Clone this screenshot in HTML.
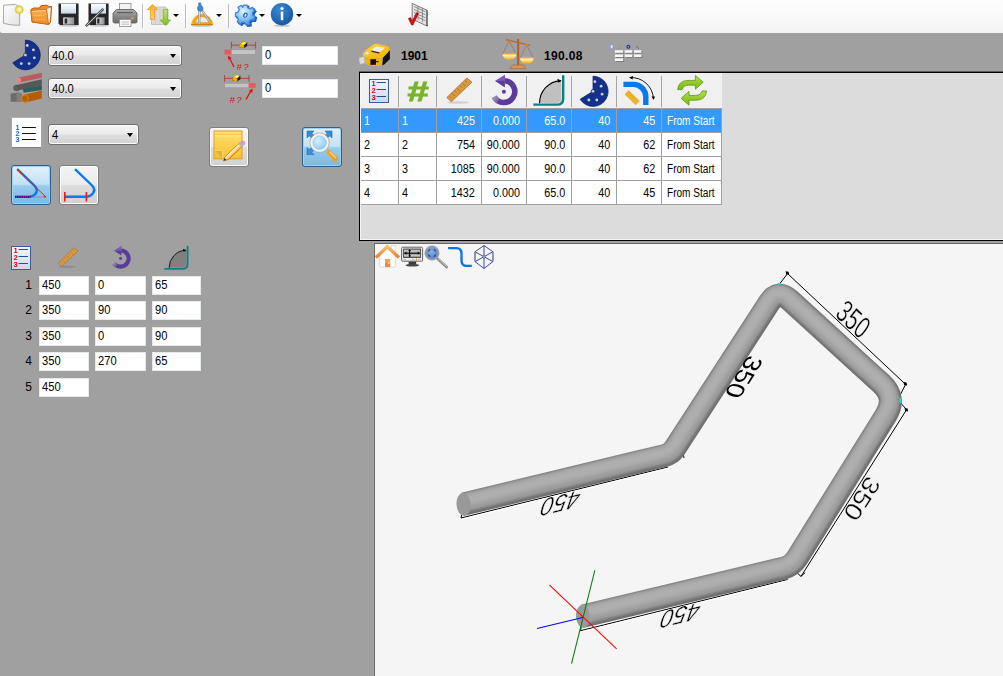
<!DOCTYPE html>
<html>
<head>
<meta charset="utf-8">
<title>Tube Bending</title>
<style>
html,body{margin:0;padding:0;}
body{width:1003px;height:676px;overflow:hidden;background:#a0a0a0;position:relative;
 font-family:"Liberation Sans",sans-serif;font-size:12px;color:#000;}
.abs{position:absolute;}
#toolbar{position:absolute;left:0;top:0;width:1003px;height:33px;
 background:linear-gradient(#fdfdfd 0%,#fafafa 45%,#f3f3f3 100%);border-bottom-left-radius:2px;}
.tsep{position:absolute;top:4px;width:1px;height:24px;background:#bdbdbd;box-shadow:1px 0 0 #fff;}
.dd{position:absolute;top:14px;width:0;height:0;border-left:3px solid transparent;border-right:3px solid transparent;border-top:3px solid #000;}
.combo{position:absolute;height:19px;border:1px solid #707070;border-radius:3px;
 background:linear-gradient(#f4f4f4 0%,#ebebeb 48%,#dedede 52%,#d2d2d2 100%);box-shadow:inset 0 0 0 1px #fbfbfb;}
.combo span{position:absolute;left:3px;top:3px;font-size:12px;line-height:15px;transform-origin:0 50%;transform:scaleX(.93);}
.combo i{position:absolute;right:5px;top:8px;width:0;height:0;border-left:3.5px solid transparent;border-right:3.5px solid transparent;border-top:4px solid #000;}
.inp{position:absolute;background:#fff;border:1px solid #e3e9ef;box-sizing:border-box;}
.inp span{position:absolute;left:2px;top:1px;font-size:12px;line-height:15px;transform-origin:0 50%;transform:scaleX(.93);}
.lbl{position:absolute;font-size:12px;line-height:15px;width:10px;text-align:right;}
.bold{position:absolute;font-weight:bold;font-size:12px;line-height:15px;}
#grid{position:absolute;left:359px;top:71px;width:644px;height:170px;background:#dcdcdc;
 border-left:1px solid #000;border-top:2px solid #000;border-top-color:#000;border-bottom:1px solid #000;box-sizing:border-box;}
#grid:before{content:'';position:absolute;left:-1px;right:0;top:-2px;height:1px;background:#5c5c5c;}
#grid .hl{position:absolute;left:0;top:0;bottom:0;width:1px;background:#f4f4f4;}
#grid .hb{position:absolute;left:0;right:0;bottom:0;height:1px;background:#f4f4f4;}
#ghead{position:absolute;left:1px;top:0;width:361px;height:35px;background:#f0f0f0;border-bottom:1px solid #a0a0a0;}
.hs{position:absolute;top:3px;width:1px;height:31px;background:#a5a5a5;}
.row{position:absolute;left:1px;width:361px;height:23px;background:#fff;border-bottom:1px solid #a0a0a0;}
.row.sel{background:#3399ff;color:#fff;}
.cell{position:absolute;top:0;height:23px;border-right:1px solid #a0a0a0;box-sizing:border-box;font-size:12px;line-height:25px;white-space:nowrap;overflow:hidden;}
.cell span{display:inline-block;transform:scaleX(.9);}
.cell.l{text-align:left;padding-left:3px;}
.cell.l span{transform-origin:0 50%;}
.cell.fs{padding-left:5px;}
.cell.fs span{transform:scaleX(.84);}
.cell.r{text-align:right;padding-right:6px;}
.cell.r span{transform-origin:100% 50%;}
#view{position:absolute;left:374px;top:243px;width:629px;height:433px;background:#f5f5f5;
 border-left:1px solid #696969;border-top:1px solid #696969;box-sizing:border-box;overflow:hidden;}
.btn{position:absolute;width:38px;height:38px;border:1px solid #7e7e7e;border-radius:3px;
 background:linear-gradient(#f4f4f4 0%,#ececec 48%,#dcdcdc 52%,#d2d2d2 100%);box-shadow:inset 0 0 0 1px #fafafa;}
.btn.on{border-color:#2c628b;background:linear-gradient(#dff0fb 0%,#c4e2f6 48%,#98ccee 52%,#7ab9e4 100%);box-shadow:inset 0 0 0 1px #9fd0ee;}
svg{position:absolute;overflow:visible;}
</style>
</head>
<body>
<div id="toolbar">
<div class="tsep" style="left:142px"></div>
<div class="tsep" style="left:185px"></div>
<div class="tsep" style="left:228px"></div>
<div class="dd" style="left:173px"></div>
<div class="dd" style="left:216px"></div>
<div class="dd" style="left:259px"></div>
<div class="dd" style="left:296px"></div>
</div>
<div id="left">
<div class="combo" style="left:48px;top:45px;width:132px"><span>40.0</span><i></i></div>
<div class="combo" style="left:48px;top:78px;width:132px"><span>40.0</span><i></i></div>
<div class="combo" style="left:48px;top:124px;width:89px"><span>4</span><i></i></div>
<div class="inp" style="left:262px;top:46px;width:76px;height:19px"><span style="top:1px">0</span></div>
<div class="inp" style="left:262px;top:79px;width:76px;height:19px"><span style="top:1px">0</span></div>
<div class="bold" style="left:401px;top:49px">1901</div>
<div class="bold" style="left:544px;top:49px;letter-spacing:.35px">190.08</div>
<div class="btn on" style="left:11px;top:165px"></div>
<div class="btn" style="left:59px;top:165px"></div>
<div class="btn" style="left:209px;top:127px"></div>
<div class="btn on" style="left:302px;top:127px"></div>
<div class="abs" style="left:12px;top:118px;width:29px;height:29px;background:#fdfdfd;box-shadow:0 1px 1px rgba(0,0,0,.25), 0 0 0 1px rgba(255,255,255,.15)"></div>
<div class="lbl" style="left:22px;top:278px">1</div>
<div class="inp" style="left:39px;top:276px;width:50px;height:19px"><span>450</span></div>
<div class="inp" style="left:95px;top:276px;width:51px;height:19px"><span>0</span></div>
<div class="inp" style="left:152px;top:276px;width:49px;height:19px"><span>65</span></div>
<div class="lbl" style="left:22px;top:303px">2</div>
<div class="inp" style="left:39px;top:301px;width:50px;height:19px"><span>350</span></div>
<div class="inp" style="left:95px;top:301px;width:51px;height:19px"><span>90</span></div>
<div class="inp" style="left:152px;top:301px;width:49px;height:19px"><span>90</span></div>
<div class="lbl" style="left:22px;top:329px">3</div>
<div class="inp" style="left:39px;top:327px;width:50px;height:19px"><span>350</span></div>
<div class="inp" style="left:95px;top:327px;width:51px;height:19px"><span>0</span></div>
<div class="inp" style="left:152px;top:327px;width:49px;height:19px"><span>90</span></div>
<div class="lbl" style="left:22px;top:354px">4</div>
<div class="inp" style="left:39px;top:352px;width:50px;height:19px"><span>350</span></div>
<div class="inp" style="left:95px;top:352px;width:51px;height:19px"><span>270</span></div>
<div class="inp" style="left:152px;top:352px;width:49px;height:19px"><span>65</span></div>
<div class="lbl" style="left:22px;top:380px">5</div>
<div class="inp" style="left:39px;top:378px;width:50px;height:19px"><span>450</span></div>
</div>
<div id="grid"><div class="hl"></div><div class="hb"></div>
<div id="ghead">
<div class="hs" style="left:37px"></div>
<div class="hs" style="left:75px"></div>
<div class="hs" style="left:120px"></div>
<div class="hs" style="left:165px"></div>
<div class="hs" style="left:210px"></div>
<div class="hs" style="left:255px"></div>
<div class="hs" style="left:300px"></div>
</div>
<div class="row sel" style="top:36px">
<div class="cell l" style="left:0px;width:38px"><span>1</span></div>
<div class="cell l" style="left:38px;width:38px"><span>1</span></div>
<div class="cell r" style="left:76px;width:45px"><span>425</span></div>
<div class="cell r" style="left:121px;width:45px"><span>0.000</span></div>
<div class="cell r" style="left:166px;width:45px"><span>65.0</span></div>
<div class="cell r" style="left:211px;width:45px"><span>40</span></div>
<div class="cell r" style="left:256px;width:45px"><span>45</span></div>
<div class="cell l fs" style="left:301px;width:60px"><span>From Start</span></div>
</div>
<div class="row" style="top:60px">
<div class="cell l" style="left:0px;width:38px"><span>2</span></div>
<div class="cell l" style="left:38px;width:38px"><span>2</span></div>
<div class="cell r" style="left:76px;width:45px"><span>754</span></div>
<div class="cell r" style="left:121px;width:45px"><span>90.000</span></div>
<div class="cell r" style="left:166px;width:45px"><span>90.0</span></div>
<div class="cell r" style="left:211px;width:45px"><span>40</span></div>
<div class="cell r" style="left:256px;width:45px"><span>62</span></div>
<div class="cell l fs" style="left:301px;width:60px"><span>From Start</span></div>
</div>
<div class="row" style="top:84px">
<div class="cell l" style="left:0px;width:38px"><span>3</span></div>
<div class="cell l" style="left:38px;width:38px"><span>3</span></div>
<div class="cell r" style="left:76px;width:45px"><span>1085</span></div>
<div class="cell r" style="left:121px;width:45px"><span>90.000</span></div>
<div class="cell r" style="left:166px;width:45px"><span>90.0</span></div>
<div class="cell r" style="left:211px;width:45px"><span>40</span></div>
<div class="cell r" style="left:256px;width:45px"><span>62</span></div>
<div class="cell l fs" style="left:301px;width:60px"><span>From Start</span></div>
</div>
<div class="row" style="top:108px">
<div class="cell l" style="left:0px;width:38px"><span>4</span></div>
<div class="cell l" style="left:38px;width:38px"><span>4</span></div>
<div class="cell r" style="left:76px;width:45px"><span>1432</span></div>
<div class="cell r" style="left:121px;width:45px"><span>0.000</span></div>
<div class="cell r" style="left:166px;width:45px"><span>65.0</span></div>
<div class="cell r" style="left:211px;width:45px"><span>40</span></div>
<div class="cell r" style="left:256px;width:45px"><span>45</span></div>
<div class="cell l fs" style="left:301px;width:60px"><span>From Start</span></div>
</div>
</div>
<div id="view">
<svg width="628" height="432" viewBox="375 244 628 432" style="left:0;top:0;will-change:transform" font-family="'Liberation Sans',sans-serif">
<defs><path id="tube" d="M464.0 504.0 L664.4 455.6 Q671.2 454.0 675.0 448.1 L769.3 302.6 Q778.0 289.2 789.8 300.0 L881.3 383.6 Q896.8 397.8 885.7 415.6 L797.3 557.7 Q792.0 566.2 782.3 568.5 L583.5 616.0" fill="none" stroke-linejoin="round"/>
<mask id="tm" maskUnits="userSpaceOnUse" x="375" y="244" width="628" height="432"><use href="#tube" stroke="#fff" stroke-width="23"/></mask>
<filter id="bl1" x="-10%" y="-10%" width="120%" height="120%"><feGaussianBlur stdDeviation="1"/></filter>
<filter id="bl2" x="-10%" y="-10%" width="120%" height="120%"><feGaussianBlur stdDeviation="2"/></filter></defs>
<g stroke="#000" stroke-width="1" fill="none">
<path d="M779.7 283.8 L787.6 273.6 L905.6 384.4 L899.8 395.6"/>
<path d="M899.8 402 L906.6 409.7 L801 576.4 M797 572.8 L801 576.4 L805.2 572.6"/>
<path d="M463.5 505 L461 518 L668 467"/>
<path d="M583 618 L580.5 630.7 L787.7 579.5"/>
<path d="M683 452.5 L684 458"/>
</g>
<g stroke="#fff" stroke-width="1" fill="none"><path d="M461.5 519.2 L668.5 468.2"/><path d="M581 631.9 L788 580.7"/></g>
<path d="M785.6 271.3 l3 0.5 l0.5 3 l-3 -0.5z M903.6 382 l3 0.5 l0.5 3 l-3 -0.5z M904.6 408 l3 0.5 l0.5 3 l-3 -0.5z" fill="#000"/>
<g mask="url(#tm)">
<use href="#tube" stroke="#707070" stroke-width="27"/>
<use href="#tube" stroke="#9a9a9a" stroke-width="18.6" transform="translate(-0.5,-1.2)" filter="url(#bl1)"/>
<use href="#tube" stroke="#afafaf" stroke-width="11" transform="translate(-1.2,-3)" filter="url(#bl2)"/>
</g>
<ellipse cx="463.5" cy="504.5" rx="7" ry="11.5" transform="rotate(-4 463.5 504.5)" fill="#999"/>
<ellipse cx="583" cy="616.5" rx="7" ry="11.5" transform="rotate(-4 583 616.5)" fill="#999"/>
<g stroke-width="1.05" fill="none"><path d="M549.3 584.8 L616.6 648.9" stroke="#ff0000"/><path d="M594.8 570.3 L571.5 663.6" stroke="#008000"/><path d="M537 628.6 L582.8 617.4" stroke="#0000ff"/></g>
<rect x="778" y="283" width="3" height="1.5" fill="#20d8e8"/><rect x="899.5" y="398" width="1.5" height="5" fill="#20d8e8"/>
<g fill="#000">
<text transform="matrix(0.653 0.619 -0.733 1.038 834.3 315.4)" font-size="24" stroke="#f5f5f5" stroke-width=".35">350</text>
<text transform="matrix(-0.624 1.001 -0.950 -0.300 748.5 354.5)" font-size="24">350</text>
<text transform="matrix(-0.638 0.982 -0.839 -0.545 867.7 474.6)" font-size="24" stroke="#f5f5f5" stroke-width=".35">350</text>
<text transform="matrix(-0.972 0.233 0.365 -1.080 582.6 489.6)" font-size="24" stroke="#f5f5f5" stroke-width=".35">450</text>
<text transform="matrix(-0.972 0.233 0.365 -1.080 702.5 601.7)" font-size="24" stroke="#f5f5f5" stroke-width=".35">450</text>
</g>
</svg>
</div>
<svg id="icons" width="1003" height="676" viewBox="0 0 1003 676" style="left:0;top:0" font-family="'Liberation Sans',sans-serif">
<defs>
<linearGradient id="gPaper" x1="0" y1="0" x2="1" y2="1"><stop offset="0" stop-color="#ffffff"/><stop offset="1" stop-color="#e2e2e2"/></linearGradient>
<radialGradient id="gGlow"><stop offset="0" stop-color="#ffffff"/><stop offset=".35" stop-color="#fff3a0"/><stop offset=".7" stop-color="#f8d040"/><stop offset="1" stop-color="#a8d850"/></radialGradient>
<linearGradient id="gFold" x1="0" y1="0" x2="0" y2="1"><stop offset="0" stop-color="#f8b050"/><stop offset="1" stop-color="#ee8c20"/></linearGradient>
<linearGradient id="gLabel" x1="0" y1="0" x2="0" y2="1"><stop offset="0" stop-color="#ffffff"/><stop offset="1" stop-color="#c8d8e8"/></linearGradient>
<linearGradient id="gShut" x1="0" y1="0" x2="1" y2="0"><stop offset="0" stop-color="#e8e8e8"/><stop offset="1" stop-color="#8c8c8c"/></linearGradient>
<linearGradient id="gPrn" x1="0" y1="0" x2="0" y2="1"><stop offset="0" stop-color="#a8a8a8"/><stop offset=".5" stop-color="#8a8a8a"/><stop offset="1" stop-color="#6a6a6a"/></linearGradient>
<linearGradient id="gUp" x1="0" y1="0" x2="0" y2="1"><stop offset="0" stop-color="#f8b020"/><stop offset="1" stop-color="#f0d080"/></linearGradient>
<linearGradient id="gDn" x1="0" y1="0" x2="0" y2="1"><stop offset="0" stop-color="#c8e070"/><stop offset="1" stop-color="#78c020"/></linearGradient>
<radialGradient id="gInfo" cx=".4" cy=".3" r=".8"><stop offset="0" stop-color="#3a8ad8"/><stop offset="1" stop-color="#12509c"/></radialGradient>
<radialGradient id="gGear" cx=".4" cy=".3" r=".75"><stop offset="0" stop-color="#e4f4ff"/><stop offset=".55" stop-color="#88c4f4"/><stop offset="1" stop-color="#3c8ce0"/></radialGradient>
</defs>
<!-- new doc -->
<g>
<path d="M3.6 5.2 L15.5 4.4 L19.6 7 L19.7 25.3 L12 25 L3.6 23.4Z" fill="url(#gPaper)" stroke="#a8a8a8" stroke-width="1"/>
<circle cx="19.2" cy="9.6" r="4.4" fill="url(#gGlow)"/>
</g>
<!-- folder -->
<g>
<path d="M31 9.5 L33.5 8 L39.5 8 L41 5.6 L47.5 5.2 L48.5 6.8 L51.6 6.4 L50.5 22 L49 24.4 L32 22Z" fill="#e89030" stroke="#b85c10" stroke-width="1"/>
<path d="M47 9 L50.8 7.4 L49.4 23 L47.4 23Z" fill="#f4f4f8"/>
<path d="M30.8 10.5 L46.6 9.4 L48.6 24.4 L32.2 21.8Z" fill="url(#gFold)" stroke="#c46a14" stroke-width=".8"/>
<path d="M32 11.4 L45.8 10.4" stroke="#fbd9a0" stroke-width=".8" fill="none"/>
<path d="M34 15.8 L44.4 15.4 M34.6 19.6 L45 19.4" stroke="#fbd9a0" stroke-width=".7" stroke-dasharray="1.2 1" fill="none"/>
</g>
<!-- save -->
<g>
<path d="M58.5 3.4 H78.6 V25 H60 L58.5 23.5Z" fill="#26262a"/>
<rect x="61" y="3.8" width="15" height="9.8" fill="url(#gLabel)"/>
<rect x="63.2" y="17.4" width="11" height="7.2" fill="url(#gShut)"/>
<rect x="64.6" y="18.6" width="2.6" height="5" fill="#2a2a2e"/>
<ellipse cx="69" cy="25.8" rx="10" ry="1" fill="#000" opacity=".18"/>
</g>
<!-- save as -->
<g>
<path d="M88.5 3.4 H108.6 V25 H90 L88.5 23.5Z" fill="#26262a"/>
<rect x="91" y="3.8" width="15" height="9.8" fill="url(#gLabel)"/>
<rect x="96.2" y="17.4" width="8.4" height="7.2" fill="url(#gShut)"/>
<rect x="97.2" y="18.6" width="2.2" height="5" fill="#2a2a2e"/>
<path d="M86.6 25.4 L102.6 9.6" stroke="#4a4a4a" stroke-width="2.6" stroke-linecap="round"/>
<path d="M86.8 25.2 L102.4 9.8" stroke="#c8c8c8" stroke-width="1" stroke-linecap="round"/>
<ellipse cx="99" cy="25.8" rx="10" ry="1" fill="#000" opacity=".18"/>
</g>
<!-- printer -->
<g>
<rect x="119.4" y="3.4" width="11.6" height="7" fill="#f4f4f4" stroke="#8c8c8c" stroke-width=".8"/>
<path d="M116.5 9.5 H133.5 L137 13 V21.5 Q137 23 135.5 23 H114.5 Q113 23 113 21.5 V13Z" fill="url(#gPrn)" stroke="#5c5c5c" stroke-width=".8"/>
<path d="M117 12.6 H133" stroke="#5a5a5a" stroke-width="1.2"/>
<rect x="131" y="17.6" width="2.6" height="1.6" fill="#f0a030"/>
<rect x="119.4" y="19.4" width="11.6" height="7.2" fill="#fafafa" stroke="#8c8c8c" stroke-width=".8"/>
<path d="M121.5 22 H129 M121.5 24.2 H129" stroke="#b4b4b4" stroke-width=".9"/>
</g>
<!-- import/export -->
<g>
<path d="M151.5 7 H165.5 L168 9.5 V24.5 H151.5Z" fill="#dcdcdc" stroke="#b8b8b8" stroke-width=".8"/>
<path d="M156 8 V24 M160 8 V24 M164 9 V24" stroke="#c8c8c8" stroke-width=".8"/>
<path d="M152.5 4.4 L157.6 9.6 H154.6 V19.4 H150.4 V9.6 H147.4Z" fill="url(#gUp)" stroke="#e89010" stroke-width=".7"/>
<path d="M165.4 25.4 L160.2 20 H163.2 V9.4 H167.6 V20 H170.6Z" fill="url(#gDn)" stroke="#70b020" stroke-width=".7"/>
</g>
<!-- compass/protractor -->
<g>
<ellipse cx="202" cy="25.6" rx="11" ry="1.1" fill="#000" opacity=".22"/>
<path d="M191.2 24.8 A11 11.8 0 0 1 213.1 24.8Z" fill="#f0a414"/>
<path d="M192 24 A10.2 11 0 0 1 197 15.4" fill="none" stroke="#f8c050" stroke-width="1"/>
<path d="M196.2 22.3 A6 5.4 0 0 1 208.2 22.3Z" fill="#ececec"/>
<path d="M191.2 24.6 H213.1" stroke="#c07c0c" stroke-width="1"/>
<path d="M199.6 9 L199.2 24" stroke="#8c8c90" stroke-width="2.2"/>
<path d="M199.6 9 L199.2 24" stroke="#dcdce0" stroke-width="1"/>
<path d="M201.2 9 L209.4 21.4" stroke="#8c8c90" stroke-width="2.2"/>
<path d="M201.2 9 L209.4 21.4" stroke="#dcdce0" stroke-width="1"/>
<path d="M198.4 3 L200.6 2.8 L201 5 L203 7.6 Q203.4 11.2 200.4 11.2 Q197.2 11.2 197.4 7.8 L198.8 5Z" fill="#3c88d4" stroke="#2468b0" stroke-width=".5"/>
</g>
<!-- gear -->
<g transform="translate(245.2 14.6) scale(.9)">
<path d="M-2 -10.6 H2 L2.8 -7.6 L5.2 -6.4 L8 -8 L10.4 -4.6 L8.2 -2.2 L8.4 0.6 L11 2 L9.8 6 L6.6 5.8 L4.6 7.8 L5 11 L1 11.6 L-0.4 8.8 L-3.2 8.4 L-5.4 10.6 L-8.8 8.2 L-7.6 5.2 L-8.8 2.8 L-11 2 L-10.6 -2 L-7.8 -2.8 L-6.6 -5.4 L-8 -8.2 L-4.6 -10.2 L-2.6 -8Z" transform="translate(1.6 1.3)" fill="#1c5cb4" stroke="#1c5cb4" stroke-width="1.6" stroke-linejoin="round"/>
<path d="M-2 -10.6 H2 L2.8 -7.6 L5.2 -6.4 L8 -8 L10.4 -4.6 L8.2 -2.2 L8.4 0.6 L11 2 L9.8 6 L6.6 5.8 L4.6 7.8 L5 11 L1 11.6 L-0.4 8.8 L-3.2 8.4 L-5.4 10.6 L-8.8 8.2 L-7.6 5.2 L-8.8 2.8 L-11 2 L-10.6 -2 L-7.8 -2.8 L-6.6 -5.4 L-8 -8.2 L-4.6 -10.2 L-2.6 -8Z" fill="url(#gGear)" stroke="#3c84d4" stroke-width="1.4" stroke-linejoin="round"/>
<ellipse cx="0.4" cy="0.4" rx="2.3" ry="3" transform="rotate(25)" fill="#1c58a8"/>
<ellipse cx="0.6" cy="0.6" rx="1.1" ry="1.8" transform="rotate(25)" fill="#d8ecfc"/>
</g>
<!-- info -->
<g>
<ellipse cx="282" cy="25.8" rx="8" ry="1" fill="#000" opacity=".2"/>
<circle cx="282" cy="14.2" r="11.2" fill="url(#gInfo)"/>
<rect x="280.8" y="11.6" width="2.4" height="8.6" rx=".6" fill="#fff"/>
<circle cx="282" cy="8.6" r="1.5" fill="#fff"/>
</g>
<!-- checklist -->
<g>
<path d="M412.2 3.4 L427 10.2 L427 26 L412.2 19.2Z" fill="#e4e4e4" stroke="#6e6e6e" stroke-width=".9"/>
<path d="M414 6.5 L425.5 11.8 M414 9.5 L425.5 14.8 M414 12.5 L425.5 17.8 M414 15.5 L425.5 20.8 M418 6 V20 M422.4 8 V22.4" stroke="#7c7c7c" stroke-width=".8" fill="none"/>
<path d="M427 10.2 L427 26 L428 25.4" stroke="#444" stroke-width="1" fill="none"/>
<path d="M408.4 18.6 L410.6 17.6 L412.4 21 L416.6 12.6 L418.4 13.4 L413 25 L411.6 25Z" fill="#e01010" stroke="#900000" stroke-width=".6"/>
</g>
<defs>
<linearGradient id="gPan" x1="0" y1="0" x2="0" y2="1"><stop offset="0" stop-color="#ff9a00"/><stop offset=".35" stop-color="#fff0c0"/><stop offset="1" stop-color="#ffa408"/></linearGradient>
<linearGradient id="gTapeTop" x1="0" y1="0" x2="1" y2="1"><stop offset="0" stop-color="#ffd640"/><stop offset="1" stop-color="#f0b000"/></linearGradient>
<linearGradient id="gRuler" x1="0" y1="0" x2="1" y2="1"><stop offset="0" stop-color="#e8b060"/><stop offset="1" stop-color="#c88428"/></linearGradient>
<linearGradient id="gPurp" x1="0" y1="0" x2="0" y2="1"><stop offset="0" stop-color="#7048a8"/><stop offset="1" stop-color="#5a3c98"/></linearGradient>
<linearGradient id="gListBg" x1="0" y1="0" x2="0" y2="1"><stop offset="0" stop-color="#f4f8fc"/><stop offset="1" stop-color="#c8d8ea"/></linearGradient>
<linearGradient id="gNote" x1="0" y1="0" x2="0" y2="1"><stop offset="0" stop-color="#ffe070"/><stop offset="1" stop-color="#f8c030"/></linearGradient>
<radialGradient id="gLens" cx=".4" cy=".35" r=".7"><stop offset="0" stop-color="#d4f0ff"/><stop offset="1" stop-color="#80c8f4"/></radialGradient>
<g id="die">
<path d="M0 0 L0 -16 A16 16 0 1 1 -13.6 8.4Z" fill="#12308c" stroke="#0c2470" stroke-width=".8"/>
<circle cx="0" cy="0" r="2" fill="#c8c8d0" stroke="#0c2470" stroke-width=".8"/>
<circle cx="2" cy="-10.2" r="1.5" fill="#d0d0d0"/><circle cx="8.6" cy="-5.4" r="1.5" fill="#d0d0d0"/>
<circle cx="9.6" cy="3" r="1.5" fill="#d0d0d0"/><circle cx="4" cy="9.2" r="1.5" fill="#d0d0d0"/>
<circle cx="-4.4" cy="9.2" r="1.5" fill="#d0d0d0"/>
</g>
<g id="tape">
<path d="M20.4 14.8 L27 7.6 L27.2 16.4 L21.4 22 L19.4 23Z" fill="#141414"/>
<path d="M0.2 11 L3.2 7.4 L10.6 2 Q12.6 1 14.4 1.2 L24.2 3.4 Q27.4 4.6 26.4 7.4 L25.2 9.6 L20.2 14.6 Q19 16 17 15.8 L2.2 15 Q0 14.4 0.2 11Z" fill="url(#gTapeTop)"/>
<path d="M1.6 14.6 L18.8 15.8 L19.4 23 L9.4 23.6 L2.4 21.2Z" fill="#f0b208"/>
<path d="M8.2 7.4 L13.2 3.6 L22.2 5.2 L17.2 9.6Z" fill="#ececec"/>
<path d="M8.2 7.8 L17.2 10 L16.2 11 L9.2 9.4Z" fill="#282828"/>
<ellipse cx="4.4" cy="10.6" rx="1.6" ry="1.3" fill="#f4f4f4"/>
<rect x="7.6" y="16.6" width="5.6" height="5.6" fill="#101010"/><rect x="13.2" y="18.6" width="2.6" height="1" fill="#101010"/>
<path d="M-3.6 15 L1.6 13.8 L2 20.6 L-2.6 21.6 Q-4.4 18.4 -3.6 15Z" fill="#dcdcdc" stroke="#a8a8a8" stroke-width=".5"/>
</g>
<g id="mtape">
<path d="M0 3 L3.6 0.4 L8 1 L8 4.6 L5 6.6 L0 5.8Z" fill="#181818"/>
<path d="M0 3 L3.6 0.4 L8 1 L4.8 3.8Z" fill="#ffd030"/>
<path d="M0 3 L4.8 3.8 L5 6.6 L0 5.8Z" fill="#f0b000"/>
<path d="M2.8 2.2 L4.4 1 L6.4 1.4 L5 2.6Z" fill="#fff"/>
</g>
</defs>
<!-- die -->
<use href="#die" transform="translate(25.4 55) scale(.93)"/>
<!-- tubes -->
<g>
<path d="M18.8 77.6 L41.8 72.8 V77.8 L19 82.6Z" fill="#be5a5a"/>
<ellipse cx="19" cy="80.2" rx="2.2" ry="2.5" fill="#ff7e80"/>
<path d="M15.8 85.2 L41.8 79.2 V85.4 L16.6 90.8Z" fill="#585858"/>
<ellipse cx="16.2" cy="88" rx="2.6" ry="2.8" fill="#606060" stroke="#484848" stroke-width=".6"/>
<path d="M23 88.8 L41.8 85.4 V90 L23.6 92.8Z" fill="#2a5e5e"/>
<path d="M10.6 93.6 L19 92.4 L21.4 93.2 V101.8 H10.6Z" fill="#6c6c6c"/>
<path d="M16.6 92.8 L19 92.4 L21.4 93.2 V101.8 H16.8Z" fill="#7e7e7e"/>
<path d="M24 94.8 L41.8 90.4 V98.6 L25.4 102.4Z" fill="#b85c00"/>
<ellipse cx="24.8" cy="98.6" rx="3.5" ry="3.8" fill="#b86000" stroke="#e08a08" stroke-width=".9"/>
</g>
<!-- measure icons -->
<g>
<rect x="224.5" y="49.8" width="31" height="4.6" fill="#c4c4c4" stroke="#8c8c8c" stroke-width=".5"/>
<rect x="224.5" y="49.8" width="7" height="4.6" fill="#e85858"/>
<path d="M231.4 41.8 V48.6 M255.6 41.8 V48.6 M231.4 45.2 H255.6" stroke="#b03030" stroke-width=".8" fill="none"/>
<use href="#mtape" transform="translate(239.2 41.4)"/>
<path d="M234 67 L229.4 58" stroke="#e01010" stroke-width="1.3" fill="none"/>
<path d="M227.8 55.6 L231.8 58 L228.2 59.8Z" fill="#e01010"/>
<text x="236.6" y="69.8" font-size="9.4" font-style="italic" fill="#b82828" letter-spacing="1.5">#?</text>
</g>
<g>
<rect x="224.5" y="83.2" width="31" height="4.6" fill="#c4c4c4" stroke="#8c8c8c" stroke-width=".5"/>
<rect x="248.6" y="83.2" width="7" height="4.6" fill="#e85858"/>
<path d="M224.6 75 V81.8 M249 75 V81.8 M224.6 78.4 H249" stroke="#b03030" stroke-width=".8" fill="none"/>
<use href="#mtape" transform="translate(232.4 74.6)"/>
<path d="M246 99.4 L251 90.8" stroke="#e01010" stroke-width="1.3" fill="none"/>
<path d="M252.6 88.4 L252.4 93 L248.8 90.8Z" fill="#e01010"/>
<text x="229.6" y="103" font-size="9.4" font-style="italic" fill="#b82828" letter-spacing="1.5">#?</text>
</g>
<!-- tape measure -->
<use href="#tape" transform="translate(362.8 42.6)"/>
<!-- scales -->
<g>
<path d="M510.2 68.6 L512.6 65 H523.4 L525.8 68.6Z" fill="#d89858" stroke="#a85c28" stroke-width=".6"/>
<rect x="517.1" y="38.8" width="2.1" height="26.4" fill="#b0622c"/>
<path d="M506 39.6 L529.8 45.4" stroke="#b4662c" stroke-width="1.3"/>
<path d="M509 41 L503.2 53 M509 41 L515.8 53 M526.6 45.2 L520.6 57 M526.6 45.2 L533 57" stroke="#a85c30" stroke-width=".8" stroke-dasharray="1.6 .8" fill="none"/>
<rect x="508" y="39.6" width="2.2" height="2.4" fill="#c87830"/><rect x="525.4" y="43.8" width="2.2" height="2.4" fill="#d88830"/>
<path d="M502.8 53.2 H516.2 V55.4 Q514.6 59.8 509.5 59.8 Q504.4 59.8 502.8 55.4Z" fill="url(#gPan)"/>
<path d="M520.2 57 H533.4 V59.2 Q531.8 63.8 526.8 63.8 Q521.8 63.8 520.2 59.2Z" fill="url(#gPan)"/>
</g>
<!-- mini tree icon -->
<g>
<g fill="#7e7e7e"><rect x="616" y="51.2" width="8.2" height="2.6"/><rect x="625.8" y="51.2" width="7.6" height="2.6"/><rect x="635" y="51.2" width="7.4" height="2.6"/>
<rect x="616" y="55.4" width="8.2" height="2.6"/><rect x="625.8" y="55.4" width="7.6" height="2.6"/><rect x="635" y="55.4" width="7.4" height="2.6"/><rect x="616" y="59.4" width="8.2" height="2.6"/></g>
<g fill="#f6f6f6"><rect x="614.9" y="50.2" width="8.2" height="2.6"/><rect x="624.7" y="50.2" width="7.6" height="2.6"/><rect x="634" y="50.2" width="7.4" height="2.6"/>
<rect x="614.9" y="54.4" width="8.2" height="2.6"/><rect x="624.7" y="54.4" width="7.6" height="2.6"/><rect x="634" y="54.4" width="7.4" height="2.6"/><rect x="614.9" y="58.4" width="8.2" height="2.6"/></g>
<rect x="610.2" y="44.8" width="2.8" height="4" fill="#dce8f8" stroke="#7088c8" stroke-width=".5"/>
<rect x="619" y="45.2" width="1.2" height="3.6" fill="#c88848"/>
<circle cx="628.4" cy="46.8" r="2" fill="#2838a0"/><circle cx="628.4" cy="46.8" r=".8" fill="#a8b0d8"/>
<path d="M636 46 L639 48.6" stroke="#707070" stroke-width="1"/>
</g>
<defs>
<g id="rlist">
<rect x=".5" y=".5" width="19" height="23" fill="url(#gListBg)" stroke="#3c5c9c" stroke-width="1"/>
<g font-size="7.6" font-weight="bold" fill="#e00010"><text x="2.4" y="6.8">1</text><text x="2.4" y="13.8">2</text><text x="2.4" y="20.8">3</text></g>
<path d="M7.6 3.5 H17 M7.6 10.5 H17 M7.6 17.5 H17" stroke="#2c4c8c" stroke-width="1"/>
</g>
<g id="ruler">
<ellipse cx="-1" cy="12.2" rx="11" ry="1.4" fill="#000" opacity=".12"/>
<path d="M-12.4 7.4 L7.6 -12.2 L12.6 -8 L-7.8 11.6Z" fill="url(#gRuler)" stroke="#a87018" stroke-width=".8"/>
<path d="M-9.6 6 l1.6 1.6 M-7 3.4 l2.4 2.4 M-4.4 0.8 l1.6 1.6 M-1.8 -1.8 l2.4 2.4 M0.8 -4.4 l1.6 1.6 M3.4 -7 l2.4 2.4 M6 -9.6 l1.6 1.6" stroke="#8c5a10" stroke-width=".7"/>
</g>
<linearGradient id="gTail" gradientUnits="userSpaceOnUse" x1="-12" y1="6" x2="-4" y2="12"><stop offset="0" stop-color="#c0c0c0" stop-opacity=".7"/><stop offset="1" stop-color="#5a3d9a"/></linearGradient>
<g id="rot">
<path d="M0.8 -10.9 A10.9 10.9 0 1 1 -9.6 5.2" fill="none" stroke="#5a3d9a" stroke-width="5.6"/>
<path d="M-5.6 9.4 A10.9 10.9 0 0 1 -9.9 4.6" fill="none" stroke="url(#gTail)" stroke-width="5.6"/>
<path d="M1 -16.6 L1 -4.2 L-8.8 -10.6Z" fill="#5a3d9a"/>
<path d="M1 -16.6 L1 -11 L-8.8 -10.6Z" fill="#7a5cb8"/>
<circle cx="0" cy="0" r="2" fill="#5a3d9a"/>
</g>
<g id="bend">
<path d="M6.6 27.6 A22.4 22.4 0 0 1 28.4 5.6 L28.4 23.4 Q28.4 28 23.6 28Z" fill="#000" fill-opacity=".2"/>
<path d="M6.6 28 A22.4 22.4 0 0 1 27.6 5.4" fill="none" stroke="#000" stroke-width="1.1"/>
<path d="M28.6 5.6 L24.4 3.6 L25.2 7.6Z" fill="#000"/>
<path d="M30.2 0 V23.2 Q30.2 29.4 24 29.4 H0.4" fill="none" stroke="#0f7f7f" stroke-width="2.4"/>
</g>
<g id="brad">
<path d="M0.4 9.4 H10.4 A12.4 12.4 0 0 1 22.8 21.8 V30" fill="none" stroke="#0a78e8" stroke-width="5.4"/>
<path d="M7.2 2.6 A22 22 0 0 1 30.4 23.6" fill="none" stroke="#000" stroke-width=".9"/>
<path d="M6 2.4 L10 1 L9.6 4.6Z M30.6 25 L28.6 21.6 L32 21.4Z" fill="#000"/>
<path d="M5.6 15.6 L16.4 26 L12.6 29.8 L2 19.4Z" fill="#f0b428" stroke="#d89810" stroke-width=".5"/><path d="M6 18.6 l1.4 -1.4 M8 20.6 l1.4 -1.4 M10 22.6 l1.4 -1.4 M12 24.6 l1.4 -1.4" stroke="#c88808" stroke-width=".5"/>
</g>
<linearGradient id="gGreen" x1="0" y1="0" x2="0" y2="1"><stop offset="0" stop-color="#b4dc40"/><stop offset="1" stop-color="#78b818"/></linearGradient>
<g id="refresh">
<path d="M0.6 14.6 Q1.6 5.6 11 5.4 H18.4 V0.4 L26.2 7.2 L18.4 14.2 V10.2 H11.6 Q6.4 10.2 5.2 14.6Z" fill="url(#gGreen)" stroke="#5a9810" stroke-width=".8" stroke-linejoin="round"/>
<path d="M29.6 16 Q28.6 25 19.2 25.2 H12 V30.2 L4.2 23.4 L12 16.4 V20.4 H18.6 Q23.8 20.4 25 16Z" fill="url(#gGreen)" stroke="#5a9810" stroke-width=".8" stroke-linejoin="round"/>
</g>
</defs>
<!-- table header icons -->
<use href="#rlist" transform="translate(369 79)"/>
<text transform="translate(407.4 101.4) scale(1.36 1)" font-size="28" font-weight="bold" fill="#78b428" stroke="#78b428" stroke-width=".9">#</text>
<use href="#ruler" transform="translate(459.2 90.2)"/>
<use href="#rot" transform="translate(503.9 91.7)"/>
<use href="#bend" transform="translate(533 75.2)"/>
<use href="#die" transform="translate(593 91.3) scale(.945)"/>
<use href="#brad" transform="translate(623 75)"/>
<use href="#refresh" transform="translate(677 75)"/>
<!-- left list header icons -->
<use href="#rlist" transform="translate(11 246)"/>
<use href="#ruler" transform="translate(68 257.2) scale(.78)"/>
<use href="#rot" transform="translate(120.6 258.6) scale(.74)"/>
<use href="#bend" transform="translate(164 246) scale(.78)"/>
<defs>
<linearGradient id="gPencil" x1="0" y1="0" x2="1" y2="1"><stop offset="0" stop-color="#f8b030"/><stop offset=".45" stop-color="#fff4d0"/><stop offset=".6" stop-color="#f8a820"/><stop offset="1" stop-color="#e88c10"/></linearGradient>
<g id="carrow"><path d="M0 0 H7 L4.8 2.2 L7.6 5 L5 7.6 L2.2 4.8 L0 7Z" fill="#3c8cd8" stroke="#2468b0" stroke-width=".6"/></g>
</defs>
<!-- list icon (blue digits) -->
<g>
<g font-size="7.4" font-weight="bold" fill="#1c6cd0"><text x="15.6" y="129.8">1</text><text x="15.6" y="135.8">2</text><text x="15.6" y="141.8">3</text></g>
<path d="M22 127.5 H35.8 M22 133.5 H35.8 M22 139.5 H35.8" stroke="#101010" stroke-width="1"/>
</g>
<!-- button 1 icon -->
<g fill="none">
<path d="M15 197 H45" stroke="#8c8c98" stroke-width="1"/>
<path d="M17.2 169.2 L34.2 185.4 Q39 190.2 35 194.4 Q32.6 196.8 29 196.8 L15 196.8" stroke="#0a78f0" stroke-width="2.4"/>
<path d="M15 197 H31" stroke="#600078" stroke-width="1.8" stroke-dasharray="1.4 .8"/>
<path d="M17 168.8 L45.4 196.6" stroke="#e02020" stroke-width="1"/>
<circle cx="45" cy="196.8" r="1" fill="#e02020"/>
</g>
<!-- button 2 icon -->
<g fill="none">
<path d="M75 169.2 L91.6 185 Q96.4 189.8 92.4 194 Q89.8 196.8 86 196.8 L65 196.8" stroke="#0a78f0" stroke-width="2.4"/>
<path d="M64.8 192 V201.4 M86.4 192 V201.4" stroke="#f01818" stroke-width="1.6"/>
</g>
<!-- note icon -->
<g>
<rect x="214" y="131" width="28" height="27.8" fill="url(#gNote)" stroke="#e09a20" stroke-width="1"/>
<path d="M214.6 135.8 H241.4" stroke="#ffeeb0" stroke-width="1"/>
<path d="M214.6 134.6 H241.4" stroke="#f0b838" stroke-width=".8"/>
<path d="M214.5 150.4 H222.6 V158.4 L214.5 150.4Z" fill="#e8b030"/>
<path d="M214.5 150.4 H222.6 V158.4" fill="none" stroke="#fbe08a" stroke-width=".8"/>
<path d="M225.2 156.6 L240.4 142.2 L243.4 145.2 L228.2 159.6 L223.6 160.8Z" fill="url(#gPencil)" stroke="#a86808" stroke-width=".7"/>
<path d="M239.6 143 L241.6 141 Q243.2 139.8 244.6 141.2 Q246 142.6 244.8 144.2 L242.8 146Z" fill="#d898dc"/>
<path d="M238.6 144 L240 142.6 L243.2 145.8 L241.8 147.2Z" fill="#b0b4bc"/>
<path d="M223.6 160.8 L224.4 158 L226.4 160Z" fill="#303040"/>
</g>
<!-- zoom fit icon -->
<g>
<use href="#carrow" transform="translate(307 131)"/>
<use href="#carrow" transform="translate(332 131) scale(-1 1)"/>
<use href="#carrow" transform="translate(307 154.6) scale(1 -1)"/>
<path d="M325.6 149 L329.4 152.8" stroke="#b8b8b8" stroke-width="4"/>
<path d="M329 152.4 L335.6 159" stroke="#f8a010" stroke-width="4.6" stroke-linecap="round"/>
<path d="M329.6 151.6 L336 158" stroke="#ffd890" stroke-width="1.2"/>
<circle cx="319.6" cy="142.7" r="8.2" fill="url(#gLens)" stroke="#f2f2f2" stroke-width="2.8"/>
<circle cx="319.6" cy="142.7" r="9.7" fill="none" stroke="#a0a0a0" stroke-width=".7"/>
<circle cx="319.6" cy="142.7" r="6.7" fill="none" stroke="#90b8d8" stroke-width=".6"/>
</g>
<defs>
<linearGradient id="gRoof" x1="0" y1="0" x2="0" y2="1"><stop offset="0" stop-color="#f8c060"/><stop offset="1" stop-color="#e88438"/></linearGradient>
<radialGradient id="gLens2" cx=".45" cy=".4" r=".7"><stop offset="0" stop-color="#88b0e0"/><stop offset="1" stop-color="#4878b8"/></radialGradient>
</defs>
<!-- home -->
<g>
<rect x="391.6" y="245.6" width="3.6" height="7" fill="#fdfdfd" stroke="#d0d0d0" stroke-width=".6"/>
<path d="M379.4 256 L387.4 248.4 L395.4 256 V265.6 Q395.4 267 394 267 H380.8 Q379.4 267 379.4 265.6Z" fill="#fdfdfd" stroke="#cfcfcf" stroke-width=".7"/>
<path d="M377 256.4 L387.4 246.6 L397.8 256.4" fill="none" stroke="url(#gRoof)" stroke-width="3.2" stroke-linecap="square" stroke-linejoin="miter"/>
<rect x="385" y="259" width="5.2" height="8" fill="#f0a050"/>
<rect x="385" y="263" width="5.2" height="4" fill="#e88c3c"/>
<rect x="388.2" y="262.4" width="1" height="1.6" fill="#fff"/>
</g>
<!-- monitor -->
<g>
<ellipse cx="412.4" cy="265.2" rx="6.8" ry="1.4" fill="#484848"/>
<rect x="408.6" y="261.4" width="7.6" height="3" fill="#3c3c3c"/>
<rect x="401.6" y="247.2" width="21" height="14" rx="1.2" fill="#ececec" stroke="#555" stroke-width=".9"/>
<rect x="403.6" y="249" width="17" height="8.4" fill="#a0a0a0" stroke="#383838" stroke-width=".8"/>
<path d="M404 251 H420 M404 255.4 H420" stroke="#c8c8c8" stroke-width="1.4"/>
<path d="M404.6 253.2 H419.6 M409.6 250 V256.4" stroke="#000" stroke-width="1.1"/>
<path d="M404 253.2 L406.4 251.6 V254.8Z M420.2 253.2 L417.8 251.6 V254.8Z M409.6 249.2 L408.2 251 H411Z M409.6 257.2 L408.2 255.4 H411Z" fill="#000"/>
<path d="M403.6 259.4 H406 M412 259.4 H415 M418 259.4 H420.6" stroke="#9a9a9a" stroke-width=".9" stroke-dasharray=".8 .8"/>
<rect x="416" y="258.4" width="1" height="2" fill="#f08818"/>
</g>
<!-- magnifier -->
<g>
<path d="M437.6 258.8 L446.6 267" stroke="#8c8c8c" stroke-width="2.8" stroke-linecap="round"/>
<path d="M437.8 258.4 L446.8 266.6" stroke="#c4c4c4" stroke-width="1"/>
<circle cx="432" cy="253" r="6.6" fill="url(#gLens2)" stroke="#9a9ea6" stroke-width="1.8"/>
<path d="M428.4 249.6 l2.4 0 l-2.4 2.4z M435.6 249.6 l-2.4 0 l2.4 2.4z M428.4 256.4 l2.4 0 l-2.4 -2.4z M435.6 256.4 l-2.4 0 l2.4 -2.4z" fill="#1c3c88"/>
</g>
<!-- s-curve -->
<path d="M448.1 248.2 H456.4 Q461.5 248.2 461.5 253.6 V260.4 Q461.5 265.8 466.6 265.8 H471.8" fill="none" stroke="#0a70f0" stroke-width="2.3"/>
<!-- hex cube -->
<g fill="none" stroke="#4048a8" stroke-width="1">
<path d="M484 245.5 L492.9 251.8 V261.6 L484 268.5 L475 261.6 V251.8Z"/>
<path d="M484 245.5 V268.5 M475 251.8 L492.9 261.6 M475 261.6 L492.9 251.8"/>
<path d="M475 251.8 V261.6 M492.9 251.8 V261.6" stroke="#8890b0" stroke-width="1.4"/>
<circle cx="484" cy="257" r="1.2" fill="#f5f5f5" stroke-width=".8"/>
</g>
</svg>
</body>
</html>
